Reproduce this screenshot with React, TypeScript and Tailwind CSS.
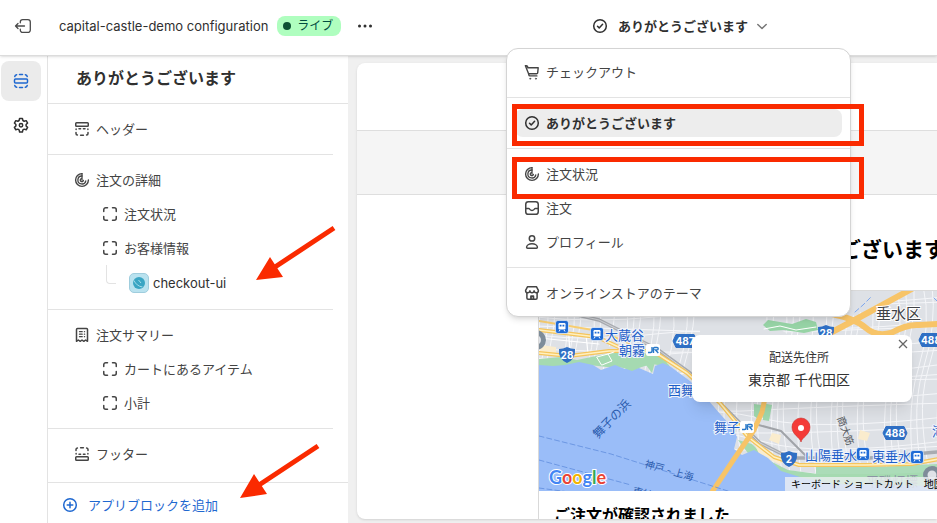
import type { ReactNode } from "react";

type IconProps = { children: ReactNode; className?: string };

function Icon({ children, className = "" }: IconProps) {
  return (
    <svg
      viewBox="0 0 20 20"
      className={`size-5 shrink-0 ${className}`}
      fill="none"
      stroke="currentColor"
      strokeWidth="1.5"
      strokeLinecap="round"
      strokeLinejoin="round"
      aria-hidden="true"
    >
      {children}
    </svg>
  );
}

const ExitIcon = () => (
  <Icon className="text-[#4a4a4a]">
    <path d="M7.3 6.8V6a2.4 2.4 0 0 1 2.4-2.4h5.200a2.400 2.400 0 0 1 2.400 2.400v8a2.400 2.400 0 0 1-2.400 2.400H9.700A2.400 2.400 0 0 1 7.300 14v-.8" strokeWidth="1.3" />
    <path d="M11.500 10H2.500M5 7.500 2.500 10 5 12.500" strokeWidth="1.3" />
  </Icon>
);

const SectionsIcon = () => (
  <Icon>
    <rect x="3.500" y="8" width="13" height="4" rx="1" />
    <path d="M3.750 5.600a2.300 2.300 0 0 1 1.900-1.900M8.500 3.600h3M14.350 3.700a2.300 2.300 0 0 1 1.900 1.900M3.750 14.400a2.300 2.300 0 0 0 1.900 1.900M8.500 16.400h3M14.350 16.300a2.300 2.300 0 0 0 1.900-1.900" />
  </Icon>
);

const GearIcon = () => (
  <Icon>
    <path d="M8.600 3.400h2.800l.5 2.100 1.300.75 2-.6 1.400 2.400-1.500 1.400v1.500l1.500 1.400-1.400 2.400-2-.6-1.300.75-.5 2.100H8.600l-.5-2.100-1.300-.75-2 .6-1.400-2.400 1.500-1.400v-1.500L3.400 8.050l1.400-2.400 2 .6 1.300-.75z" />
    <circle cx="10" cy="10.200" r="1.700" />
  </Icon>
);

const HeaderIcon = () => (
  <Icon>
    <rect x="3.750" y="3.750" width="12.500" height="3.500" rx="0.800" />
    <path d="M4.100 9.900v.7M15.900 9.900v.7M7 9.800h1.600M11.400 9.800H13M4 13.400v1a1.600 1.600 0 0 0 1.400 1.600M16 13.400v1a1.600 1.600 0 0 1-1.400 1.600M8.600 16.200h2.800" />
  </Icon>
);

const FooterIcon = () => (
  <Icon>
    <rect x="3.750" y="12.750" width="12.500" height="3.500" rx="0.800" />
    <path d="M4.100 10.100v-.7M15.900 10.100v-.7M7 10.200h1.600M11.400 10.200H13M4 6.600v-1a1.600 1.600 0 0 1 1.400-1.600M16 6.600v-1A1.600 1.600 0 0 0 14.600 4M8.600 3.800h2.800" />
  </Icon>
);

const StatusIcon = () => (
  <Icon>
    <path d="M10 3.600A6.400 6.400 0 1 0 16.400 10" strokeWidth="1.400" />
    <path d="M10 6A4 4 0 1 0 13.800 10.800" strokeWidth="1.300" />
    <path d="M10 3.600V10M9 8.700a1.600 1.600 0 1 0 2.400 1.600" strokeWidth="1.300" />
  </Icon>
);

const BlockIcon = () => (
  <Icon>
    <path d="M3.750 7.500V5.750a2 2 0 0 1 2-2H7.500M12.500 3.750h1.750a2 2 0 0 1 2 2V7.500M16.250 12.500v1.750a2 2 0 0 1-2 2H12.500M7.500 16.250H5.750a2 2 0 0 1-2-2V12.500" />
  </Icon>
);

const ReceiptIcon = () => (
  <Icon>
    <path d="M4.500 16.300V4.600c0-.6.4-1 1-1h9c.6 0 1 .4 1 1v11.700l-1.900-1.300-1.800 1.300L10 15l-1.800 1.300L6.400 15z" />
    <path d="M7.500 6.700h2.700M12.400 6.700h.2M7.500 9.200h2.700M12.400 9.200h.2M7.500 11.700h2.700M12.400 11.700h.2" strokeWidth="1.300" />
  </Icon>
);

const PlusCircleIcon = () => (
  <Icon>
    <circle cx="10" cy="10" r="6.300" />
    <path d="M10 7.200v5.600M7.200 10h5.600" />
  </Icon>
);

const CheckCircleIcon = () => (
  <Icon>
    <circle cx="10" cy="10" r="6.300" />
    <path d="m7.500 10.200 1.700 1.700 3.400-3.600" />
  </Icon>
);

const CartIcon = () => (
  <Icon>
    <path d="M3.400 3.700h1c.7 0 1.200.5 1.300 1.100l.1.900h10.400l-.5 5.100c-.1.500-.5.900-1 .9H6.600zM6.600 11.700l.2 1.200c.1.600.5 1 1.100 1h7" strokeWidth="1.400" />
    <circle cx="8.200" cy="16.700" r="0.600" fill="currentColor" strokeWidth="0.500" />
    <circle cx="13.900" cy="16.700" r="0.600" fill="currentColor" strokeWidth="0.500" />
  </Icon>
);

const InboxIcon = () => (
  <Icon>
    <rect x="3.750" y="3.750" width="12.500" height="12.500" rx="2.600" />
    <path d="M4 10.400h2.600c.4 0 .7.2.9.6.4.8 1.200 1.400 2.500 1.400s2.100-.6 2.500-1.400c.2-.4.5-.6.9-.6H16" />
  </Icon>
);

const PersonIcon = () => (
  <Icon>
    <circle cx="10" cy="6.400" r="2.700" />
    <path d="M4.600 15.300c0-2 2.300-3.500 5.400-3.500s5.400 1.500 5.400 3.500c0 .6-.4.950-.95.950h-8.900c-.55 0-.95-.35-.95-.95z" />
  </Icon>
);

const StoreIcon = () => (
  <Icon>
    <path d="M4.900 10v5.100c0 .7.5 1.200 1.200 1.200h7.800c.7 0 1.200-.5 1.200-1.200V10" />
    <path d="M5.600 3.700h8.800l2 3.700c0 1.500-.9 2.400-2.100 2.400s-2.100-.9-2.200-2.100c-.1 1.200-1 2.100-2.100 2.100s-2-.9-2.100-2.100c-.1 1.200-1 2.100-2.200 2.100s-2.100-.9-2.100-2.400z" />
    <path d="M9 16v-2.800h2.400V16" strokeWidth="1.800" />
  </Icon>
);

function AppBadge() {
  return (
    <svg viewBox="0 0 20 20" className="size-5 shrink-0" aria-hidden="true">
      <rect x="0.500" y="0.500" width="19" height="19" rx="4.500" fill="#b9e2ef" stroke="#9fcddd" />
      <circle cx="10" cy="10" r="6" fill="#3aa5c3" />
      <path d="M5 7.500c1.500 3.500 4.500 6 8.500 6.500M9.500 7l2.500 3" stroke="#a5dcea" strokeWidth="1" fill="none" />
    </svg>
  );
}

function Row({ icon, label, nested = false }: { icon: ReactNode; label: string; nested?: boolean }) {
  return (
    <li>
      <button type="button" className={`flex h-[34px] w-full items-center gap-1 text-left ${nested ? "pl-[52px]" : "pl-6"}`}>
        {icon}
        <span>{label}</span>
      </button>
    </li>
  );
}

function Sidebar() {
  return (
    <aside className="flex w-[300px] shrink-0 flex-col bg-white">
      <h1 className="flex h-12 shrink-0 items-center border-b border-[#e3e3e3] pb-[3px] pl-7 text-base font-semibold">ありがとうございます</h1>
      <div className="mr-[15px] flex-1 overflow-hidden text-[#444]">
        <ul className="border-b border-[#e3e3e3] py-2">
          <Row icon={<HeaderIcon />} label="ヘッダー" />
        </ul>
        <ul className="border-b border-[#e3e3e3] py-2">
          <Row icon={<StatusIcon />} label="注文の詳細" />
          <Row icon={<BlockIcon />} label="注文状況" nested />
          <Row icon={<BlockIcon />} label="お客様情報" nested />
          <li className="flex h-9 pl-[58px]">
            <span className="h-[19px] w-[10px] rounded-bl border-b border-l border-[#e3e3e3]" />
            <button type="button" className="ml-[13px] flex items-center gap-1 text-[#303030]">
              <AppBadge />
              <span>checkout-ui</span>
            </button>
          </li>
        </ul>
        <ul className="border-b border-[#e3e3e3] py-2">
          <Row icon={<ReceiptIcon />} label="注文サマリー" />
          <Row icon={<BlockIcon />} label="カートにあるアイテム" nested />
          <Row icon={<BlockIcon />} label="小計" nested />
        </ul>
        <ul className="py-2">
          <Row icon={<FooterIcon />} label="フッター" />
        </ul>
      </div>
      <div className="shrink-0 border-t border-[#e3e3e3] pt-1">
        <button type="button" className="flex h-9 items-center gap-2 pl-3 text-[#1f68d0]">
          <PlusCircleIcon />
          アプリブロックを追加
        </button>
      </div>
    </aside>
  );
}

function MenuItem({ icon, label, active = false }: { icon: ReactNode; label: string; active?: boolean }) {
  return (
    <li>
      <button
        type="button"
        className={`flex h-7 w-full items-center gap-1 rounded-lg pl-[7px] text-left ${active ? "bg-[#ededed] font-semibold" : "text-[#444]"}`}
      >
        {icon}
        <span>{label}</span>
      </button>
    </li>
  );
}

const menuGroup = "flex flex-col gap-[6px] px-2 py-[11px] first:pt-[9px] last:pb-[9px]";

function PageMenu() {
  return (
    <nav className="absolute top-8 left-[-84px] z-20 w-[345px] divide-y divide-[#e3e3e3] rounded-xl border border-[#d4d4d4] bg-white shadow-md">
      <ul className={menuGroup}>
        <MenuItem icon={<CartIcon />} label="チェックアウト" />
      </ul>
      <ul className={menuGroup}>
        <MenuItem icon={<CheckCircleIcon />} label="ありがとうございます" active />
      </ul>
      <ul className={menuGroup}>
        <MenuItem icon={<StatusIcon />} label="注文状況" />
        <MenuItem icon={<InboxIcon />} label="注文" />
        <MenuItem icon={<PersonIcon />} label="プロフィール" />
      </ul>
      <ul className={menuGroup}>
        <MenuItem icon={<StoreIcon />} label="オンラインストアのテーマ" />
      </ul>
    </nav>
  );
}

function TopBar() {
  return (
    <header className="relative z-10 flex h-14 shrink-0 items-center border-b border-[#dcdcdc] bg-white pb-[3px] pl-[13px] shadow-sm">
      <button type="button" aria-label="終了">
        <ExitIcon />
      </button>
      <span className="ml-[26px]">capital-castle-demo configuration</span>
      <span className="ml-[9px] flex h-5 items-center gap-[6px] rounded-lg bg-[#affebf] px-[6px] text-xs text-[#014b40]">
        <span className="size-2 rounded-full bg-[#0c5132]" />
        <span className="pr-[2px]">ライブ</span>
      </span>
      <button type="button" aria-label="その他の操作" className="ml-[14px]">
        <Icon>
          <path d="M4.500 10h.01M10 10h.01M15.500 10h.01" strokeWidth="3" />
        </Icon>
      </button>
      <div className="relative mr-[165px] ml-auto">
        <button type="button" aria-expanded="true" className="flex items-center font-semibold">
          <CheckCircleIcon />
          <span className="ml-2">ありがとうございます</span>
          <Icon className="ml-1 text-[#777]">
            <path d="m5.800 8.500 4.200 4 4.200-4" />
          </Icon>
        </button>
        <PageMenu />
      </div>
    </header>
  );
}

/* Local streets, drawn as two crossing families of slightly wavy lines. */
const streets = Array.from({ length: 46 }, (_, i) => {
  const x = 530 + i * 10 + ((i * 13) % 7);
  const w = (i * 7) % 11;
  return `M${x} 285q${w} 40 ${w - 14} 85t${8 - w} 125`;
}).join("");
const crossStreets = Array.from({ length: 20 }, (_, i) => {
  const y = 280 + i * 11 + ((i * 3) % 5);
  const w = (i * 5) % 9;
  return `M535 ${y}q60 ${w} 120 ${6 - w}t110 ${w}t180 ${w - 8}`;
}).join("");

function Shield({ x, y, label }: { x: number; y: number; label: string }) {
  return (
    <g>
      <path d={`M${x - 8} ${y - 6}q4 0 8-2 4 2 8 2 1 10-8 14-9-4-8-14z`} fill="#2f6fc4" />
      <text x={x} y={y + 4} textAnchor="middle" fontSize="10" fontWeight="700" fill="#fff">{label}</text>
    </g>
  );
}

function RoutePlate({ x, y, label }: { x: number; y: number; label: string }) {
  return (
    <g>
      <path d={`M${x - 12} ${y}l3-6.500h18l3 6.500-3 6.500h-18z`} fill="#2f6fc4" stroke="#2f6fc4" strokeLinejoin="round" />
      <text x={x} y={y + 4} textAnchor="middle" fontSize="10" fontWeight="700" fill="#fff">{label}</text>
    </g>
  );
}

function Station({ x, y }: { x: number; y: number }) {
  return (
    <g>
      <rect x={x - 6.500} y={y - 6.500} width="13" height="13" rx="2.500" fill="#1f6bd6" stroke="#fff" strokeWidth="0.600" />
      <rect x={x - 3.500} y={y - 4} width="7" height="6.500" rx="1.200" fill="#fff" />
      <path d={`M${x - 2.300} ${y - 2.200}h1.800v1.800h-1.800zM${x + 0.500} ${y - 2.200}h1.800v1.800h-1.800z`} fill="#1f6bd6" />
      <path d={`M${x - 2} ${y + 3}l-1 1.500M${x + 2} ${y + 3}l1 1.500`} stroke="#fff" />
    </g>
  );
}

function JrMark({ x, y }: { x: number; y: number }) {
  return (
    <g>
      <rect x={x - 7} y={y - 6} width="14" height="12" rx="2" fill="#fff" />
      <path d={`M${x - 5} ${y + 2.500}h2.500q1.500 0 1.500-1.500v-4M${x + 0.500} ${y + 3}v-4.500q0-1 1-1h2.500q1.200 0 1.200 1.200t-1.200 1.200h-1.500l2.800 3`} stroke="#2878c8" strokeWidth="1.400" fill="none" />
    </g>
  );
}

function MapDrawing() {
  return (
    <svg viewBox="539 291 398 200" preserveAspectRatio="xMinYMin slice" className="block h-[200px] w-full" role="img" aria-label="配送先の地図">
      <rect x="539" y="291" width="600" height="200" fill="#dee1e6" />
      <g fill="none" stroke="#f5f6f9" strokeWidth="1">
        <path d={streets} />
        <path d={crossStreets} />
      </g>
      <path d="M850 291h55l-55 26zM700 316h60l30 20h-90zM600 345l30 5-10 8-20-2z" fill="#dee1e6" />
      <path d="M763 325l5-5 24 4 14-5 10 3 2 8-14 3-20-3-14 1z" fill="#96d3a5" />
      <path d="M539 359l22-2 16 3 24-5 20-3 34 0 10 8 6 8-18-4-16 4-30-1-18-2-30 5-20-3z" fill="#a5dab1" />
      <path d="M738 440l14 4 16 16 20 10 30 4 119-6v26H800l-30-12z" fill="#a5dab1" />
      <path d="M754 404l8 1-4 14-4-3zM762 403l10 2-3 16-6-1z" fill="#9fd8ad" />
      <path d="M772 433l9 2-2 9-10-4zM860 430l10 3-3 8-9-2zM540 345l16 2v6h-17zM755 445l14 8 14 9-4 2-20-10z" fill="#faeccd" />
      <path d="M539 365l14 1 12-1 14-3 14 3 8 5 14-5 10 4 14-1 14 6 2-8 8-3 8 4 19 14 12 12 19 22 11 12 5 10-3 12 8 6 12-5 14 8 13 13 22 7 30 6 110 2v20H539z" fill="#9abdf8" />
      <path d="M617 352h42l4 8-8 2-3 11-6-8-14 6-14-5z" fill="#a5dab1" />
      <path d="M816 467h60l61-3v8l-50 2h-71z" fill="#abdcb8" />
      <g fill="none" strokeLinecap="round" strokeLinejoin="round">
        <path d="M539 316v36M568 322l2 32M586 334l2 20M539 338l60 6" stroke="#fff" strokeWidth="1.200" />
        <path d="M539 306l60 14 58 29 33 24 30 30 40 40 30 15h80l67-6" stroke="#a8abb0" strokeWidth="3.500" />
        <path d="M539 306l60 14 58 29 33 24 30 30 40 40 30 15" stroke="#d2d4d8" strokeWidth="1" />
        <path d="M755 424l26 7 24 24" stroke="#a0a3a8" strokeWidth="2" />
        <path d="M539 330l58 7 26 12M539 353l30 3 40-5 44 0 34 22 33 30 28 34 26 20 25 8h66l47-1 27-5" stroke="#f5c55c" strokeWidth="4" />
        <path d="M539 330l58 7 26 12M539 353l30 3 40-5 44 0 34 22 33 30 28 34 26 20 25 8h66l47-1 27-5" stroke="#fff0c0" strokeWidth="1.500" />
        <path d="M539 321l60 10 30 12" stroke="#f7cd70" strokeWidth="2" />
        <path d="M597 357l11-3 4 7-10 4zM608 354l6-2" stroke="#fff" />
        <path d="M765 398l-3 14-8 18-20 29-24 36" stroke="#f7c468" strokeWidth="5" />
        <path d="M917 286l-66 36-34 18M832 314q24 5 34 14t25 5q16-9 28-8l18-1h200" stroke="#f7c468" strokeWidth="6" />
        <path d="M764 329l16-3 16 4 20-3" stroke="#fff" />
        <path d="M855 312l8-7 8-8M934 298l6 6" stroke="#7da7ee" strokeDasharray="5 3" />
        <path d="M539 436l72 18 120 38M539 460l92 25M539 488l30 4" stroke="#5f8ddd" strokeWidth="0.800" strokeDasharray="5 3" />
      </g>
      <circle cx="536" cy="340" r="10" fill="#7e8c99" />
      <circle cx="536" cy="340" r="5" fill="#dfe2e7" />
      <circle cx="932" cy="475" r="9" fill="#7e8c99" />
      <circle cx="932" cy="475" r="4.500" fill="#dfe2e7" />
      <g fontSize="13" fill="#1f5fc8" stroke="#eef3fb" strokeWidth="2" paintOrder="stroke">
        <text x="605" y="340">大蔵谷</text>
        <text x="619" y="355">朝霧</text>
        <text x="668" y="395">西舞子</text>
        <text x="714" y="432">舞子</text>
        <text x="805" y="460">山陽垂水</text>
        <text x="872" y="461">東垂水</text>
        <text x="932" y="436">滝</text>
      </g>
      <g fontSize="12" fill="#2b5cae">
        <text transform="translate(598 439) rotate(-46)">舞子の浜</text>
        <text transform="translate(644 467) rotate(16)" fontSize="10">神戸 - 上海</text>
        <text transform="translate(632 494) rotate(14)" fontSize="10">東神戸</text>
      </g>
      <text x="876" y="319" fontSize="15" fill="#3f4246" stroke="#fff" strokeWidth="2" paintOrder="stroke">垂水区</text>
      <text transform="translate(837 418) rotate(70)" fontSize="10" fill="#55595f">商大筋</text>
      <text x="866" y="486" fontSize="13" fill="#8b95a3">平磯灯標</text>
      <Station x={562} y={327} />
      <Station x={597} y={334} />
      <Station x={863} y={454} />
      <Station x={917} y={457} />
      <JrMark x={653} y={350} />
      <JrMark x={747} y={427} />
      <Shield x={567} y={355} label="28" />
      <Shield x={826} y={333} label="28" />
      <Shield x={789} y={459} label="2" />
      <RoutePlate x={685} y={341} label="487" />
      <RoutePlate x={895} y={433} label="488" />
      <RoutePlate x={931} y={340} label="488" />
      <path d="M801 442c-1-5-9-7-9-15a9 9 0 0 1 18 0c0 8-8 10-9 15z" fill="#f43b38" stroke="#c9302c" strokeWidth="0.600" />
      <circle cx="801" cy="428" r="3" fill="#fff" />
      <text x="549" y="484" fontSize="18" fontFamily="Lato, sans-serif" fontWeight="700" stroke="#fff" strokeWidth="2" paintOrder="stroke">
        <tspan fill="#4285f4">G</tspan>
        <tspan fill="#ea4335">o</tspan>
        <tspan fill="#f2b400">o</tspan>
        <tspan fill="#4285f4">g</tspan>
        <tspan fill="#34a853">l</tspan>
        <tspan fill="#ea4335">e</tspan>
      </text>
    </svg>
  );
}

function Preview() {
  return (
    <main className="flex min-w-0 flex-1 bg-[#f0f0f0] pt-[7px] pb-1 pl-[9px]">
      <div className="flex min-w-0 flex-1 flex-col overflow-hidden rounded-l-lg bg-white text-black shadow">
        <div className="h-[68px] shrink-0 border-b border-[#dedede]" />
        <div className="h-16 shrink-0 border-b border-[#dedede] bg-[#f5f5f5]" />
        <h2 className="mt-[39px] shrink-0 pl-[378px] text-[21px] leading-8 font-bold whitespace-nowrap">ありがとうございます</h2>
        <section className="mt-6 ml-[181px] shrink-0 border-t border-l border-[#d9d9d9]">
          <div className="relative overflow-hidden">
            <MapDrawing />
            <div className="absolute top-11 left-[153px] flex h-[67px] w-[220px] flex-col items-center justify-center rounded-lg bg-white pt-[2px] pr-[6px] text-[#333] shadow-lg">
              <span className="text-xs leading-5">配送先住所</span>
              <span className="text-sm leading-6">東京都 千代田区</span>
              <button type="button" aria-label="閉じる" className="absolute top-1 right-1">
                <svg viewBox="0 0 10 10" className="size-[10px]" stroke="#666" strokeWidth="1.300" aria-hidden="true">
                  <path d="M1 1l8 8M9 1 1 9" />
                </svg>
              </button>
            </div>
            <div className="absolute bottom-0 left-[246px] flex h-[14px] w-full items-center gap-[10px] bg-[#eceff3]/80 pl-[6px] text-[10px] leading-none whitespace-nowrap">
              <button type="button">キーボード ショートカット</button>
              <span>地図データ</span>
            </div>
          </div>
          <h3 className="pt-3 pb-10 pl-[15px] text-base leading-6 font-bold">ご注文が確認されました</h3>
        </section>
      </div>
    </main>
  );
}

function Annotations() {
  return (
    <div className="pointer-events-none absolute inset-0 z-30">
      <div className="absolute top-[104px] left-[512px] h-[42px] w-[352px] border-[5px] border-[#fa2a00]" />
      <div className="absolute top-[157px] left-[512px] h-[42px] w-[352px] border-[5px] border-[#fa2a00]" />
      <svg className="absolute top-0 left-0 h-[523px] w-[348px]" viewBox="0 0 348 523" stroke="#fa2a00" fill="#fa2a00" aria-hidden="true">
        <path d="M334 228 275 267M318 446 259 485" strokeWidth="5" />
        <path d="M256 280 270 257 283 277zM240 498 254 474 267 494z" stroke="none" />
      </svg>
    </div>
  );
}

export default function App() {
  return (
    <div className="relative flex h-screen flex-col overflow-hidden bg-white font-[Inter,'Noto_Sans_CJK_JP',sans-serif] text-[13px] leading-5 text-[#303030]">
      <TopBar />
      <div className="flex min-h-0 flex-1">
        <nav className="flex w-12 shrink-0 flex-col gap-1 border-r border-[#e3e3e3] bg-white pt-[5px] pl-px">
          <button type="button" aria-label="セクション" className="flex size-10 items-center justify-center rounded-lg bg-[#ebebeb] text-[#1f68d0]">
            <SectionsIcon />
          </button>
          <button type="button" aria-label="設定" className="flex size-10 items-center justify-center rounded-lg">
            <GearIcon />
          </button>
        </nav>
        <Sidebar />
        <Preview />
      </div>
      <Annotations />
    </div>
  );
}
